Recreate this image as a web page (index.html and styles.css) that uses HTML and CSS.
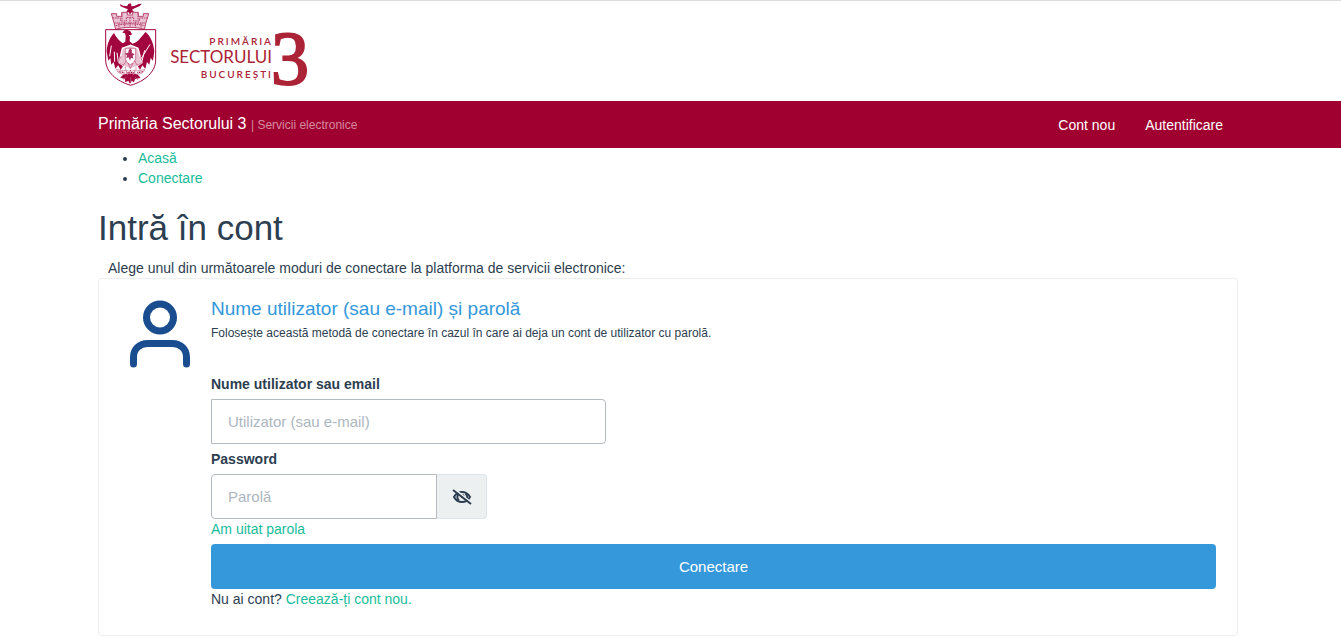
FILE: index.html
```
<!DOCTYPE html>
<html lang="ro">
<head>
    <meta charset="utf-8">
    <title>Intră în cont</title>
    <link rel="stylesheet" href="styles.css">
</head>
<body>
    <header class="top">
        <div class="container">
            <svg class="logo" viewBox="0 1 216 95" role="img" aria-label="Primăria Sectorului 3 București">
                <!-- coat of arms -->
                <g transform="translate(-3 0) scale(0.3333)" fill="none" stroke="#a3053f" stroke-width="3">
                    <!-- eagle on the crown -->
                    <path fill="#a3053f" stroke="none" d="M74 12l10 5 12 2 4-7 7-2 3 5-3 4 11-1 13-6 10-1-8 8-14 6-8 4 8 9-8-2-6 7-5-7-8 3 7-11-10-4-12-5z"/>
                    <!-- crown -->
                    <g stroke="#b8426f">
                        <path fill="#eac3d3" d="M49 41h16v8h15V37h17v8h16v-8h17v12h15v-8h16l-8 27-5 20c-27-8-58-8-86 0l-5-20z"/>
                        <path d="M53 54h24v9h17V52h22v11h17v-9h23M57 69h95M62 77c27-7 60-7 86 0M72 70v16M89 66v18M105 53v29M121 66v18M138 70v16M81 40v18M129 40v18" stroke-dasharray="5 2"/>
                    </g>
                    <!-- shield -->
                    <path d="M32 89h150v91c0 35-31 63-75 76-44-13-75-41-75-76z"/>
                    <!-- eagle -->
                    <path fill="#a3053f" stroke="none" d="M61 96c-15 11-25 35-26 58l5 28 6-8 3 20 7-8 5 20 9-10 7 14 8-14h42l8 14 7-14 9 10 5-20 7 8 4-20 7 8 4-28c-2-23-11-47-27-58-8 10-17 23-27 30l-11 5-9-7 1-15 6-6-5-9-9-5-9 2-6 7 8 2 2 8-1 17-8 5c-10-8-19-17-26-31z"/>
                    <path fill="#a3053f" stroke="none" d="M76 233l16-17 6 8 8-15 9 15 6-8 16 18-17 3-3 10-7-5-5 10-5-10-9 5-1-10z"/>
                    <path stroke="#fff" d="M49 137l-5 32M58 155l1 30M66 158l4 28M165 133l-36 58M149 151l-9 37M88 111v15M102 107h8"/>
                    <!-- inner shield -->
                    <path fill="#eac3d3" stroke="#fff" stroke-width="4" d="M82 145l-10 43 19 13 15 6 16-6 19-13-12-43-22-9z"/>
                    <path fill="#fff" stroke="#bd4874" stroke-width="2" d="M91 145h31v33c-4 8-9 12-16 16-7-4-13-8-15-16z"/>
                    <path fill="#b02b5f" stroke="none" d="M101 151l5-6 5 6-1 7 9 5-6 4 2 9-7-3-3 9-4-10-7 3 2-9-7-5 11-3z"/>
                    <path stroke="#c14b78" stroke-width="2" d="M78 169l-8 19 16 7M136 169l7 18-17 9M94 182l-9 15M118 181l9 16M99 189l7 17 8-17"/>
                    <!-- ribbon -->
                    <path fill="#fff" stroke="#c56287" stroke-width="2" d="M65 208c11 4 20 5 28 4l5 8c-11 5-23 2-30-5zM149 208c-11 4-20 5-28 4l-6 8c12 5 25 2 31-5zM94 210c8 5 18 5 25 0v8c-8 4-17 4-25 0z"/>
                    <path stroke="#a3053f" stroke-width="4" stroke-dasharray="3 2" d="M71 215l17 3M98 218h18M127 218l17-3"/>
                    <path stroke="#c56287" stroke-width="2" d="M82 202l-5 5M91 200v9M123 200v9M132 202l5 5M94 231l-9 9M120 231l9 9M107 232v16"/>
                </g>
                <g class="logo-text">
                    <text class="logo-small" x="175" y="45" text-anchor="end">PRIMĂRIA</text>
                    <text class="logo-big" x="174" y="63" text-anchor="end">SECTORULUI</text>
                    <text class="logo-small" x="175" y="78" text-anchor="end">BUCUREȘTI</text>
                    <text class="logo-number" x="173" y="84">3</text>
                </g>
            </svg>
        </div>
    </header>

    <nav class="navbar">
        <div class="container navbar-inner">
            <a class="brand" href="#">Primăria Sectorului 3 <small>| Servicii electronice</small></a>
            <div class="nav-links">
                <a href="#">Cont nou</a>
                <a href="#">Autentificare</a>
            </div>
        </div>
    </nav>

    <main class="container">
        <ul class="breadcrumbs">
            <li><a href="#">Acasă</a></li>
            <li><a href="#">Conectare</a></li>
        </ul>
        <h1>Intră în cont</h1>
        <p class="intro">Alege unul din următoarele moduri de conectare la platforma de servicii electronice:</p>

        <section class="card">
            <svg class="user-icon" viewBox="0 0 64 72" aria-hidden="true">
                <circle cx="32" cy="18.500" r="13.500"/>
                <path d="M5.500 65v-7c0-8 6-13.500 14-13.500h25c8 0 14 5.500 14 13.500v7"/>
            </svg>
            <form class="login" onsubmit="return false">
                <h2>Nume utilizator (sau e-mail) și parolă</h2>
                <p class="hint">Folosește această metodă de conectare în cazul în care ai deja un cont de utilizator cu parolă.</p>

                <label for="username">Nume utilizator sau email</label>
                <input class="field username" type="text" id="username" placeholder="Utilizator (sau e-mail)">

                <label for="password">Password</label>
                <div class="password-group">
                    <input class="field password" type="password" id="password" placeholder="Parolă">
                    <button class="toggle" type="button" id="togglePassword" aria-label="Arată parola">
                        <svg viewBox="0 0 20 16" aria-hidden="true">
                            <path class="eye" d="M2 8c2-3.500 4.500-5 8-5s6 1.500 8 5c-2 3.500-4.500 5-8 5s-6-1.500-8-5z"/>
                            <path class="eye-line" d="M7 4.500a4.500 4.500 0 0 0 0 7M13.500 4.500a4.500 4.500 0 0 1 0 7"/>
                            <circle class="pupil" cx="10.500" cy="7" r="2"/>
                            <path class="slash-gap" d="M3 .5l16 13"/>
                            <path class="slash" d="M1 1l18 14"/>
                        </svg>
                    </button>
                </div>
                <a href="#">Am uitat parola</a>
                <button class="submit" type="submit">Conectare</button>
                <p>Nu ai cont? <a href="#">Creează-ți cont nou.</a></p>
            </form>
        </section>
    </main>

    <script>
        // Show or hide the password
        document.querySelector('#togglePassword').addEventListener('click', function() {
            const password = document.querySelector('#password');
            password.type = password.type === 'password' ? 'text' : 'password';
        });
    </script>
</body>
</html>
```
FILE: styles.css
```
* {
    box-sizing: border-box;
}

body {
    margin: 0;
    font-family: "Liberation Sans", Arial, sans-serif;
    font-size: 14px;
    line-height: 20px;
    color: #2c3e50;
    background-color: #fff;
}

a {
    color: #18bc9c;
    text-decoration: none;
}

a:hover {
    text-decoration: underline;
}

p {
    margin: 0;
}

.container {
    max-width: 1145px;
    margin: 0 auto;
    padding-right: 5px;
}

/* Header with the logo */
.top {
    border-top: 1px solid #ddd;
    padding-bottom: 5px;
}

.logo {
    display: block;
    width: 216px;
    height: 95px;
    overflow: visible;
}

.logo-text {
    fill: #ab2336;
    font-family: Lato, sans-serif;
}

.logo-small {
    font-size: 10px;
    font-weight: 600;
    letter-spacing: 2px;
}

.logo-big {
    font-size: 17px;
}

.logo-number {
    font-family: "Liberation Serif", serif;
    font-size: 76px;
    stroke: #ab2336;
    stroke-width: 2;
}

/* Red bar */
.navbar {
    background-color: #a0002f;
}

.navbar-inner {
    display: flex;
    justify-content: space-between;
    align-items: center;
    height: 47px;
}

.navbar a {
    color: #fff;
}

.brand {
    font-size: 16px;
}

.brand small {
    font-size: 12px;
    color: #d58ba1;
}

.nav-links {
    display: flex;
    gap: 30px;
    padding-right: 15px;
}

.breadcrumbs {
    margin: 0 0 20px;
    padding-left: 40px;
}

h1 {
    margin: 0 0 10px;
    font-size: 35px;
    font-weight: normal;
    line-height: 40px;
}

.intro {
    padding-left: 10px;
}

/* Login box */
.card {
    display: flex;
    gap: 19px;
    padding: 20px 21px 26px 29px;
    border: 1px solid #eee;
    border-radius: 4px;
}

.user-icon {
    flex: none;
    width: 64px;
    height: 72px;
    fill: none;
    stroke: #1a4d8f;
    stroke-width: 7;
    stroke-linecap: round;
}

.login {
    flex: 1;
}

h2 {
    margin: 0;
    font-size: 19px;
    font-weight: normal;
    color: #3498db;
}

.hint {
    margin: 4px 0 31px;
    font-size: 12px;
}

label {
    display: block;
    margin-bottom: 5px;
    font-weight: bold;
}

.field {
    display: block;
    height: 45px;
    padding: 10px 16px;
    border: 1px solid #b4bcc2;
    font-family: inherit;
    font-size: 15px;
    color: #2c3e50;
    background-color: #fff;
}

.field::placeholder {
    color: #acb6c0;
}

.username {
    width: 100%;
    max-width: 395px;
    margin-bottom: 5px;
    border-radius: 0 4px 4px 0;
}

.password-group {
    display: flex;
}

.password {
    width: 226px;
    border-radius: 4px 0 0 4px;
}

.toggle {
    display: flex;
    align-items: center;
    justify-content: center;
    width: 50px;
    padding: 0;
    border: 1px solid #dce4ec;
    border-left: none;
    border-radius: 0 4px 4px 0;
    background-color: #ecf0f1;
    cursor: pointer;
}

.toggle svg {
    width: 20px;
    height: 16px;
}

.eye,
.eye-line,
.slash-gap,
.slash {
    fill: none;
    stroke: #2c3e50;
    stroke-width: 2;
}

.pupil {
    fill: #2c3e50;
}

.slash-gap {
    stroke: #ecf0f1;
}

.submit {
    display: block;
    width: 100%;
    height: 45px;
    margin-top: 5px;
    border: none;
    border-radius: 4px;
    font-family: inherit;
    font-size: 15px;
    color: #fff;
    background-color: #3498db;
    cursor: pointer;
}

.submit:hover {
    background-color: #217dbb;
}
```
